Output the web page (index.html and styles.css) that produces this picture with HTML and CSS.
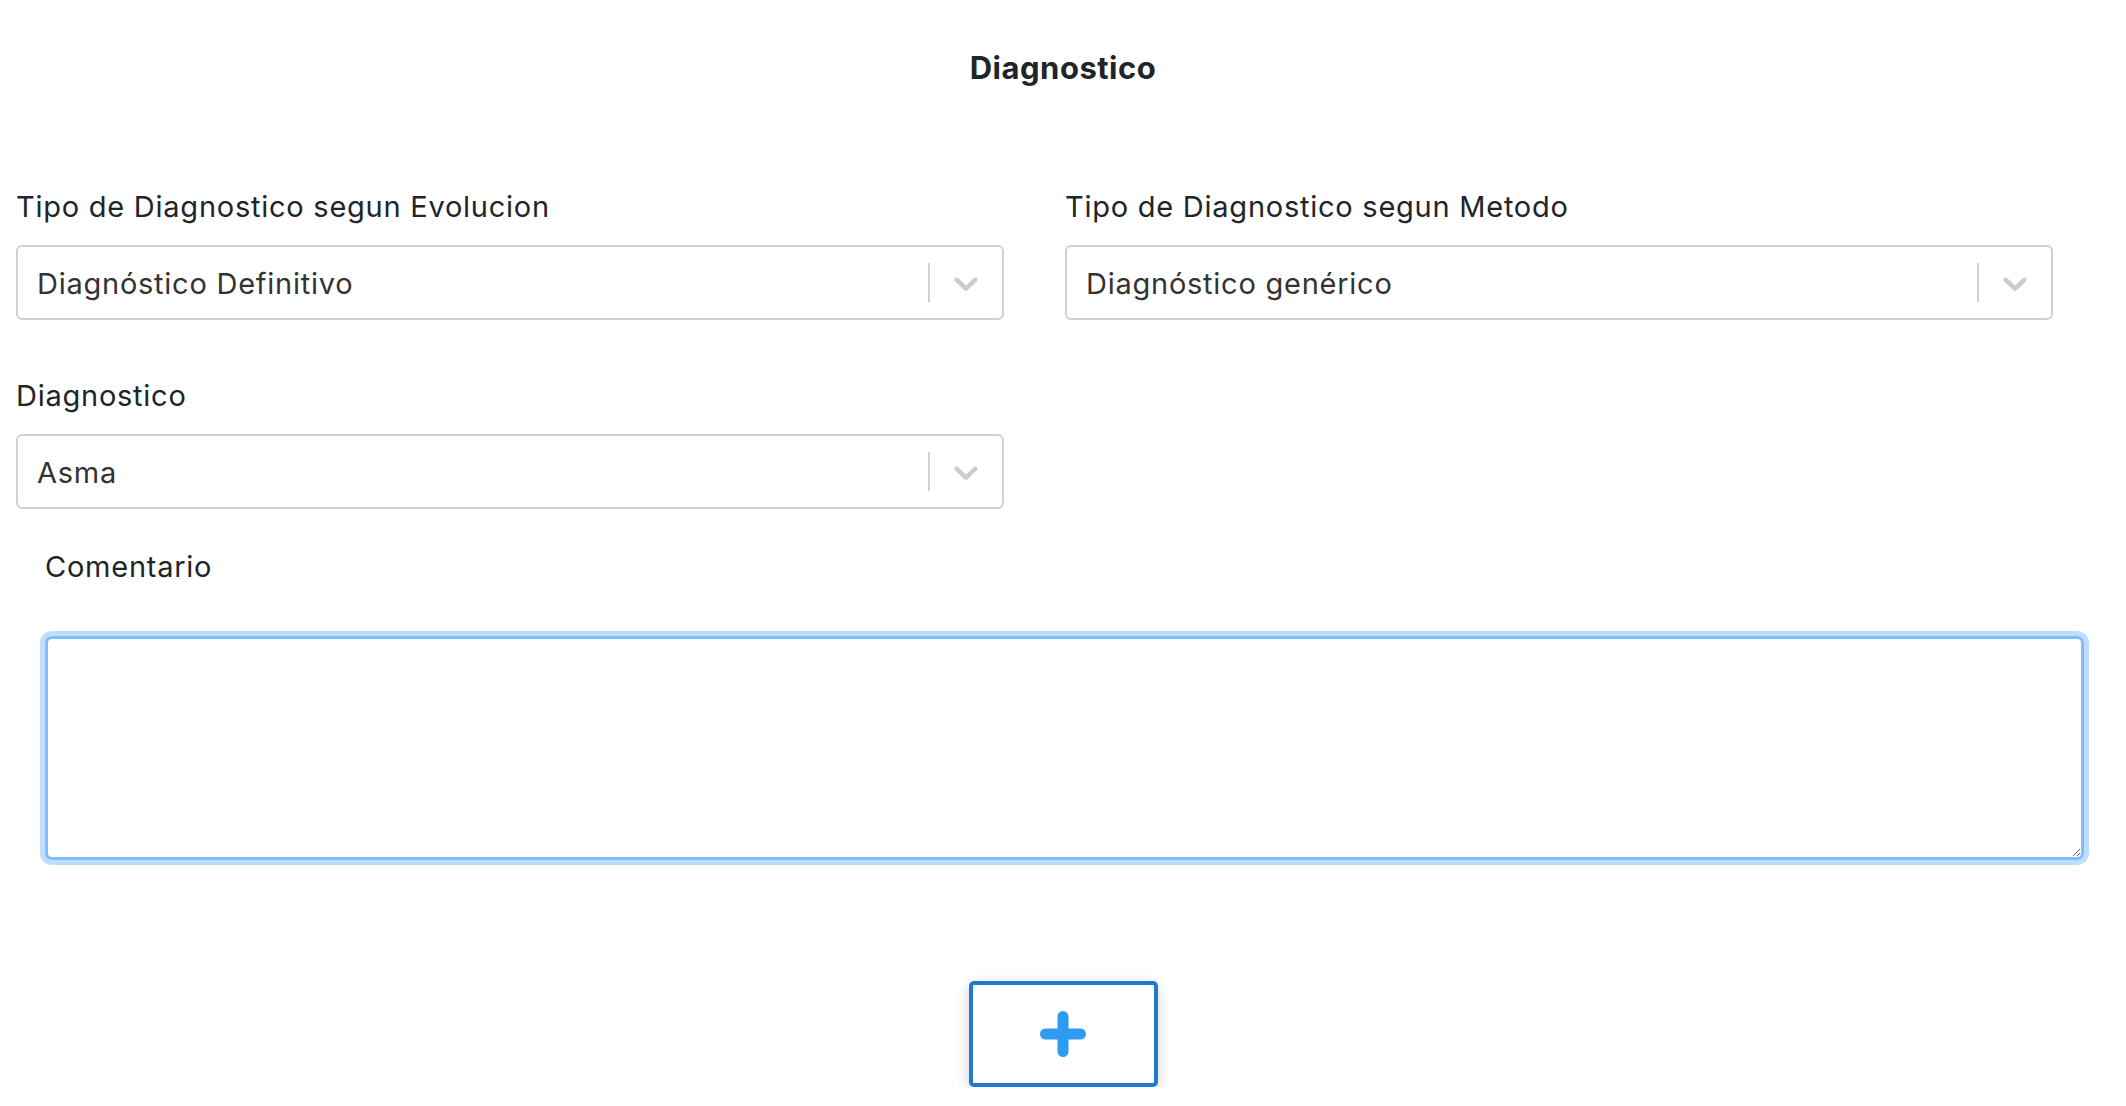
FILE: index.html
```html
<!DOCTYPE html>
<html lang="es">
<head>
<meta charset="utf-8">
<title>Diagnostico</title>
<link rel="stylesheet" href="styles.css">
</head>
<body>
<div class="form">
  <h5 class="title">Diagnostico</h5>
  <div class="fields">
    <div class="field">
      <label class="label">Tipo de Diagnostico segun Evolucion</label>
      <div class="select">
        <div class="select-value">Diagnóstico Definitivo</div>
        <span class="select-sep"></span>
        <div class="select-ind">
          <svg width="40" height="40" viewBox="0 0 20 20"><path fill="#cccccc" d="M4.516 7.548c0.436-0.446 1.043-0.481 1.576 0l3.908 3.747 3.908-3.747c0.533-0.481 1.141-0.446 1.574 0 0.436 0.445 0.408 1.197 0 1.615-0.406 0.418-4.695 4.502-4.695 4.502-0.217 0.223-0.502 0.335-0.787 0.335s-0.57-0.112-0.789-0.335c0 0-4.287-4.084-4.695-4.502s-0.436-1.17 0-1.615z"/></svg>
        </div>
      </div>
    </div>
    <div class="field">
      <label class="label">Tipo de Diagnostico segun Metodo</label>
      <div class="select">
        <div class="select-value">Diagnóstico genérico</div>
        <span class="select-sep"></span>
        <div class="select-ind">
          <svg width="40" height="40" viewBox="0 0 20 20"><path fill="#cccccc" d="M4.516 7.548c0.436-0.446 1.043-0.481 1.576 0l3.908 3.747 3.908-3.747c0.533-0.481 1.141-0.446 1.574 0 0.436 0.445 0.408 1.197 0 1.615-0.406 0.418-4.695 4.502-4.695 4.502-0.217 0.223-0.502 0.335-0.787 0.335s-0.57-0.112-0.789-0.335c0 0-4.287-4.084-4.695-4.502s-0.436-1.17 0-1.615z"/></svg>
        </div>
      </div>
    </div>
    <div class="field">
      <label class="label">Diagnostico</label>
      <div class="select">
        <div class="select-value">Asma</div>
        <span class="select-sep"></span>
        <div class="select-ind">
          <svg width="40" height="40" viewBox="0 0 20 20"><path fill="#cccccc" d="M4.516 7.548c0.436-0.446 1.043-0.481 1.576 0l3.908 3.747 3.908-3.747c0.533-0.481 1.141-0.446 1.574 0 0.436 0.445 0.408 1.197 0 1.615-0.406 0.418-4.695 4.502-4.695 4.502-0.217 0.223-0.502 0.335-0.787 0.335s-0.57-0.112-0.789-0.335c0 0-4.287-4.084-4.695-4.502s-0.436-1.17 0-1.615z"/></svg>
        </div>
      </div>
    </div>
  </div>
  <div class="comment">
    <label class="label">Comentario</label>
    <textarea class="textarea"></textarea>
  </div>
  <div class="actions">
    <button class="add-btn" type="button" aria-label="Agregar">
      <svg width="48" height="48" viewBox="0 0 48 48"><path d="M24 6.5V41.5M6.5 24H41.5" stroke="#2d9bf0" stroke-width="11" stroke-linecap="round" fill="none"/></svg>
    </button>
  </div>
</div>
</body>
</html>
```

FILE: styles.css
```css
* { box-sizing: border-box; }

html, body {
  margin: 0;
  padding: 0;
  background: #ffffff;
}

body {
  font-family: Inter, "Noto Sans", "Liberation Sans", sans-serif;
  color: #212529;
  font-size: 29px;
}

.form {
  padding: 0 42px 0 16px;
}

.title {
  margin: 49px -26px 0 0;
  font-size: 31px;
  line-height: 37px;
  letter-spacing: 0.5px;
  font-weight: 700;
  text-align: center;
}

.fields {
  display: grid;
  grid-template-columns: 988px 988px;
  column-gap: 61px;
  row-gap: 54px;
  margin-top: 99px;
}

.label {
  display: block;
  font-size: 29px;
  line-height: 43px;
  letter-spacing: 0.75px;
  font-weight: 400;
  color: #212529;
}

.field .label {
  margin-bottom: 17px;
}

.select {
  display: flex;
  align-items: center;
  height: 75px;
  border: 2px solid #d0d0d0;
  border-radius: 6px;
  background: #fff;
}

.select-value {
  flex: 1;
  padding-left: 19px;
  font-size: 29px;
  line-height: 40px;
  letter-spacing: 0.75px;
  color: #333333;
  white-space: nowrap;
  overflow: hidden;
  padding-top: 2px;
}

.select-sep {
  width: 2px;
  height: 39px;
  background: #d0d0d0;
}

.select-ind {
  display: flex;
  align-items: center;
  padding: 0 16px;
}

.select-ind svg {
  display: block;
}

.comment {
  margin: 36px 0 0 29px;
}

.comment .label {
  margin-bottom: 48px;
}

.textarea {
  display: block;
  width: 100%;
  height: 224px;
  border: 3px solid #80bdff;
  border-radius: 7px;
  box-shadow: 0 0 0 5px rgba(0, 123, 255, 0.25);
  outline: none;
  font-family: inherit;
  font-size: 29px;
  resize: vertical;
  margin: 0;
  background: #fff;
}

.actions {
  display: flex;
  justify-content: center;
  margin: 121px -26px 0 0;
}

.add-btn {
  width: 189px;
  height: 106px;
  border: 4px solid #1f78d1;
  border-radius: 5px;
  background: #fff;
  box-shadow: 0 4px 14px rgba(0, 0, 0, 0.18);
  display: flex;
  align-items: center;
  justify-content: center;
  padding: 0;
  cursor: pointer;
}

.add-btn svg {
  display: block;
}
```
